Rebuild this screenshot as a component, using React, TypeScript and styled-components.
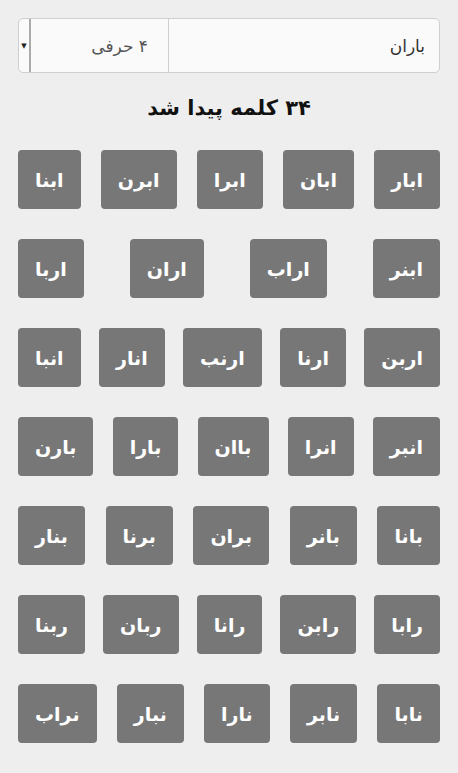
import styled, { createGlobalStyle } from 'styled-components'

const GlobalStyle = createGlobalStyle`
  html, body {
    margin: 0;
    padding: 0;
    background: #eeeeee;
  }
  body {
    font-family: "DejaVu Sans", "Noto Sans", sans-serif;
  }
`

const Page = styled.main`
  direction: rtl;
  padding: 18px 18px 20px;
`

const SearchBar = styled.div`
  display: flex;
  height: 55px;
  box-sizing: border-box;
  background: #fafafa;
  border: 1px solid #cfcfcf;
  border-radius: 5px;
  overflow: hidden;
`

const WordInput = styled.div`
  flex: 1;
  display: flex;
  align-items: center;
  padding: 0 14px;
  font-size: 17px;
  color: #333;
  border-left: 1px solid #cfcfcf;
`

const Select = styled.div`
  width: 149px;
  display: flex;
  align-items: center;
`

const SelectValue = styled.div`
  flex: 1;
  padding: 0 20px;
  font-size: 17px;
  color: #555;
  border-left: 2px solid #aaa;
  height: 100%;
  display: flex;
  align-items: center;
`

const Arrow = styled.div`
  width: 10px;
  display: flex;
  justify-content: center;
  font-size: 7px;
  color: #222;
`

const Heading = styled.h2`
  margin: 23px 0 30px;
  text-align: center;
  font-size: 21px;
  font-weight: bold;
  color: #111;
`

const Words = styled.div`
  display: flex;
  flex-wrap: wrap;
  justify-content: space-between;
  column-gap: 18px;
  row-gap: 30px;
`

const Word = styled.div`
  height: 59px;
  padding: 0 17px;
  display: flex;
  align-items: center;
  justify-content: center;
  background: #777777;
  border-radius: 4px;
  color: #fff;
  font-size: 19px;
  font-weight: bold;
`

const words = [
  'ابار', 'ابان', 'ابرا', 'ابرن', 'ابنا',
  'ابنر', 'اراب', 'اران', 'اربا',
  'اربن', 'ارنا', 'ارنب', 'انار', 'انبا',
  'انبر', 'انرا', 'باان', 'بارا', 'بارن',
  'بانا', 'بانر', 'بران', 'برنا', 'بنار',
  'رابا', 'رابن', 'رانا', 'ربان', 'ربنا',
  'نابا', 'نابر', 'نارا', 'نبار', 'نراب',
]

export default function App() {
  return (
    <Page>
      <GlobalStyle />
      <SearchBar>
        <WordInput>باران</WordInput>
        <Select>
          <SelectValue>۴ حرفی</SelectValue>
          <Arrow>▼</Arrow>
        </Select>
      </SearchBar>
      <Heading>۳۴ کلمه پیدا شد</Heading>
      <Words>
        {words.map((w) => (
          <Word key={w}>{w}</Word>
        ))}
      </Words>
    </Page>
  )
}
